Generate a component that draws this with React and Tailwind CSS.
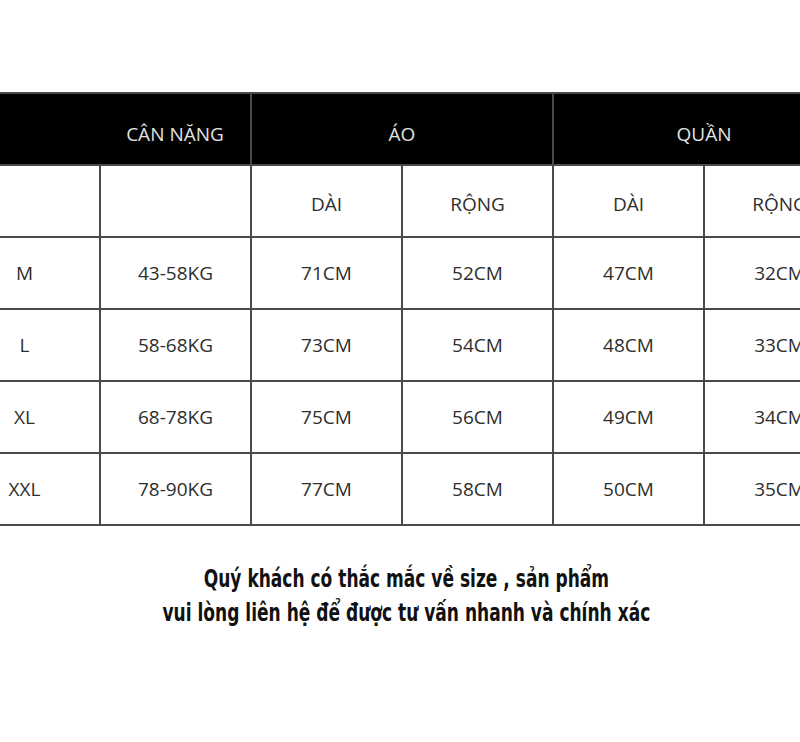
import React from "react";

const rows = [
  ["M", "43-58KG", "71CM", "52CM", "47CM", "32CM"],
  ["L", "58-68KG", "73CM", "54CM", "48CM", "33CM"],
  ["XL", "68-78KG", "75CM", "56CM", "49CM", "34CM"],
  ["XXL", "78-90KG", "77CM", "58CM", "50CM", "35CM"],
];

export default function App() {
  const cell = "border-2 border-[#4a4a4a] text-center align-middle";
  return (
    <div className="w-[800px] h-[742px] bg-white overflow-hidden font-['Open_Sans',sans-serif]">
      <table className="table-fixed border-collapse w-[906px] ml-[-52px] mt-[92px] text-[19px] text-[#2e2e2e]">
        <colgroup>
          {[0, 1, 2, 3, 4, 5].map((i) => (
            <col key={i} className="w-[151px]" />
          ))}
        </colgroup>
        <tbody>
          <tr className="h-[72px] bg-black text-[#e2e2e2]">
            <td className="border-y-2 border-l-2 border-[#4a4a4a]"></td>
            <td className="border-y-2 border-r-2 border-[#4a4a4a] text-center pt-[11px]">CÂN NẶNG</td>
            <td colSpan={2} className={cell + " pt-[11px]"}>ÁO</td>
            <td colSpan={2} className={cell + " pt-[11px]"}>QUẦN</td>
          </tr>
          <tr className="h-[72px]">
            <td className={cell}></td>
            <td className={cell}></td>
            <td className={cell + " pt-[6px]"}>DÀI</td>
            <td className={cell + " pt-[6px]"}>RỘNG</td>
            <td className={cell + " pt-[6px]"}>DÀI</td>
            <td className={cell + " pt-[6px]"}>RỘNG</td>
          </tr>
          {rows.map((r) => (
            <tr key={r[0]} className="h-[72px]">
              {r.map((v, i) => (
                <td key={i} className={cell}>{v}</td>
              ))}
            </tr>
          ))}
        </tbody>
      </table>
      <div className="mt-[36px] pl-[18px] text-center text-[#111] font-bold text-[24px] leading-[34px] font-['DejaVu_Sans',sans-serif] scale-x-[0.71] origin-center">
        <p>Quý khách có thắc mắc về size , sản phẩm</p>
        <p>vui lòng liên hệ để được tư vấn nhanh và chính xác</p>
      </div>
    </div>
  );
}
